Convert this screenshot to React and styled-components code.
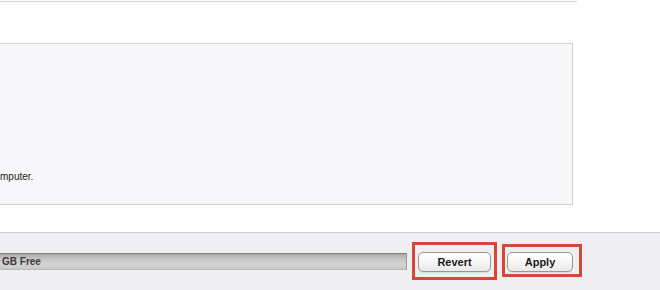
import React from 'react';
import styled, { createGlobalStyle } from 'styled-components';

const GlobalStyle = createGlobalStyle`
  html, body {
    margin: 0;
    padding: 0;
    background: #fefefe;
    font-family: "Liberation Sans", Arial, sans-serif;
  }
`

const Window = styled.div`
  width: 660px;
  height: 290px;
  overflow: hidden;
  display: flex;
  flex-direction: column;
  background: #fefefe;
`

const TopStrip = styled.div`
  width: 577px;
  height: 41px;
  margin-top: 1px;
  border-top: 1px solid #d4d3d6;
  background: #fefdfe;
`

const InfoBox = styled.div`
  width: 573px;
  height: 162px;
  border: 1px solid #d3d2d5;
  border-left: none;
  background: #f7f6f8;
  padding-top: 127px;
  box-sizing: border-box;
`

const InfoText = styled.p`
  margin: 0;
  font-size: 10px;
  line-height: 12px;
  color: #1e1e1e;
`

const Gap = styled.div`
  height: 27px;
`

const BottomBar = styled.div`
  flex: 1;
  display: flex;
  align-items: flex-start;
  gap: 5px;
  border-top: 1px solid #cfced1;
  background: #efeef1;
`

const Capacity = styled.div`
  width: 407px;
  height: 17px;
  margin-top: 20px;
  box-sizing: border-box;
  border-top: 1px solid #7d7d7d;
  border-right: 1px solid #9a9a9a;
  border-bottom: 1px solid #b8b8b8;
  background: linear-gradient(#a9a9a9 0%, #c4c4c4 30%, #d3d3d3 70%, #c9c9c9 100%);
  display: flex;
  align-items: center;
  padding-left: 2px;
  font-size: 10px;
  font-weight: bold;
  color: #3a3a3a;
`

const Highlight = styled.div`
  margin-top: ${p => p.$top}px;
  border: 3px solid #d6473a;
  padding: ${p => p.$pad};
  display: flex;
`

const MacButton = styled.button`
  width: ${p => p.$w}px;
  height: 20px;
  padding: 0;
  border: 1px solid #979797;
  border-radius: 5px;
  background: linear-gradient(#ffffff 0%, #f6f6f6 50%, #e9e9e9 100%);
  box-shadow: 0 1px 0 rgba(0, 0, 0, 0.08);
  font-family: "Liberation Sans", Arial, sans-serif;
  font-size: 11px;
  font-weight: bold;
  color: #1a1a1a;
`

export default function App() {
  return (
    <Window>
      <GlobalStyle />
      <TopStrip />
      <InfoBox>
        <InfoText>mputer.</InfoText>
      </InfoBox>
      <Gap />
      <BottomBar>
        <Capacity>GB Free</Capacity>
        <Highlight $top={9} $pad="7px 3px 5px 3px">
          <MacButton $w={73}>Revert</MacButton>
        </Highlight>
        <Highlight $top={11} $pad="5px 6px 2px 2px">
          <MacButton $w={66}>Apply</MacButton>
        </Highlight>
      </BottomBar>
    </Window>
  );
}
